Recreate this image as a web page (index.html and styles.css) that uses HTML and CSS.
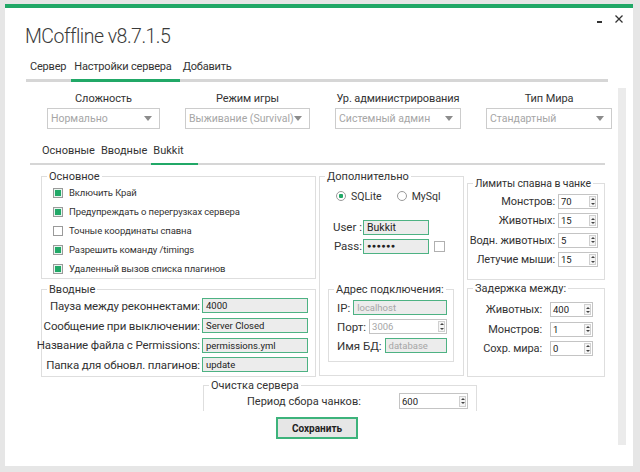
FILE: index.html
```html
<!DOCTYPE html>
<html lang="ru">

<head>
  <meta charset="UTF-8" />
  <meta name="viewport" content="width=device-width, initial-scale=1.0" />
  <title>MCoffline</title>
  <link rel="stylesheet" href="styles.css">
</head>

<body>
  <div class="window">
    <div class="header">
      <h1 class="title">MCoffline v8.7.1.5</h1>
      <div class="win-controls">
        <span class="win-min"></span>
        <svg class="win-close" width="8" height="8" viewBox="0 0 8 8">
          <path d="M0.5 0.5 L7.5 7.5 M7.5 0.5 L0.5 7.5" stroke="#333" stroke-width="1.3" />
        </svg>
      </div>
    </div>

    <ul class="tabs">
      <li>Сервер</li>
      <li class="active">Настройки сервера</li>
      <li>Добавить</li>
    </ul>

    <div class="panel">
      <div class="panel-body">

        <div class="selects">
          <div class="select-field">
            <div class="select-label">Сложность</div>
            <div class="select"><span>Нормально</span><i class="arrow"></i></div>
          </div>
          <div class="select-field">
            <div class="select-label">Режим игры</div>
            <div class="select"><span>Выживание (Survival)</span><i class="arrow"></i></div>
          </div>
          <div class="select-field">
            <div class="select-label">Ур. администрирования</div>
            <div class="select"><span>Системный админ</span><i class="arrow"></i></div>
          </div>
          <div class="select-field">
            <div class="select-label">Тип Мира</div>
            <div class="select"><span>Стандартный</span><i class="arrow"></i></div>
          </div>
        </div>

        <ul class="subtabs">
          <li>Основные</li>
          <li>Вводные</li>
          <li class="active">Bukkit</li>
        </ul>

        <div class="groups">
          <!-- left column -->
          <div class="col col-left">
            <fieldset class="box box-main">
              <legend>Основное</legend>
              <div class="check-row"><span class="check on"></span>Включить Край</div>
              <div class="check-row"><span class="check on"></span>Предупреждать о перегрузках сервера</div>
              <div class="check-row"><span class="check"></span>Точные координаты спавна</div>
              <div class="check-row"><span class="check on"></span>Разрешить команду /timings</div>
              <div class="check-row"><span class="check on"></span>Удаленный вызов списка плагинов</div>
            </fieldset>

            <fieldset class="box box-inputs">
              <legend>Вводные</legend>
              <div class="form-row"><label>Пауза между реконнектами:</label><div class="input">4000</div></div>
              <div class="form-row"><label>Сообщение при выключении:</label><div class="input">Server Closed</div></div>
              <div class="form-row"><label>Название файла с Permissions:</label><div class="input">permissions.yml</div></div>
              <div class="form-row"><label>Папка для обновл. плагинов:</label><div class="input">update</div></div>
            </fieldset>
          </div>

          <!-- middle column -->
          <div class="col col-mid">
            <fieldset class="box box-extra">
              <legend>Дополнительно</legend>
              <div class="radio-row">
                <span class="radio on"></span>SQLite
                <span class="radio second"></span>MySql
              </div>
              <div class="login-row user-row"><label>User :</label><div class="input">Bukkit</div></div>
              <div class="login-row"><label>Pass:</label><div class="input dots">●●●●●●</div><span class="check small"></span></div>

              <fieldset class="box box-addr">
                <legend>Адрес подключения:</legend>
                <div class="addr-row"><label>IP:</label><div class="input muted">localhost</div></div>
                <div class="addr-row"><label>Порт:</label>
                  <div class="spin muted"><span>3006</span><span class="spin-btns"><i class="up"></i><i class="down"></i></span></div>
                </div>
                <div class="addr-row"><label>Имя БД:</label><div class="input muted">database</div></div>
              </fieldset>
            </fieldset>
          </div>

          <!-- right column -->
          <div class="col col-right">
            <fieldset class="box box-limits">
              <legend>Лимиты спавна в чанке</legend>
              <div class="num-row"><label>Монстров:</label>
                <div class="spin"><span>70</span><span class="spin-btns"><i class="up"></i><i class="down"></i></span></div>
              </div>
              <div class="num-row"><label>Животных:</label>
                <div class="spin"><span>15</span><span class="spin-btns"><i class="up"></i><i class="down"></i></span></div>
              </div>
              <div class="num-row"><label>Водн. животных:</label>
                <div class="spin"><span>5</span><span class="spin-btns"><i class="up"></i><i class="down"></i></span></div>
              </div>
              <div class="num-row"><label>Летучие мыши:</label>
                <div class="spin"><span>15</span><span class="spin-btns"><i class="up"></i><i class="down"></i></span></div>
              </div>
            </fieldset>

            <fieldset class="box box-delay">
              <legend>Задержка между:</legend>
              <div class="num-row"><label>Животных:</label>
                <div class="spin"><span>400</span><span class="spin-btns"><i class="up"></i><i class="down"></i></span></div>
              </div>
              <div class="num-row"><label>Монстров:</label>
                <div class="spin"><span>1</span><span class="spin-btns"><i class="up"></i><i class="down"></i></span></div>
              </div>
              <div class="num-row"><label>Сохр. мира:</label>
                <div class="spin"><span>0</span><span class="spin-btns"><i class="up"></i><i class="down"></i></span></div>
              </div>
            </fieldset>
          </div>
        </div>

        <fieldset class="box box-clean">
          <legend>Очистка сервера</legend>
          <div class="clean-row"><label>Период сбора чанков:</label>
            <div class="spin"><span>600</span><span class="spin-btns"><i class="up"></i><i class="down"></i></span></div>
          </div>
        </fieldset>

        <button class="save-btn">Сохранить</button>
      </div>
      <div class="scrolltrack"></div>
    </div>
  </div>
</body>

</html>
```

FILE: styles.css
```css
:root {
  --green: #21a867;
  --green-border: #4db283;
  --line: #d6d6d6;
  --box-line: #dedede;
  --text: #333333;
  --muted: #a6a6a6;
}

body {
  margin: 0;
  background-color: #e6e6e6;
  font-family: Roboto, 'Noto Sans', sans-serif;
  color: var(--text);
}

.window {
  margin: 4px 7px 6px 5px;
  height: 458px;
  background-color: #ffffff;
  border-top: 4px solid var(--green);
  display: flex;
  flex-direction: column;
}

/* title bar */
.header {
  display: flex;
  height: 42px;
  padding-left: 20px;
}

.title {
  margin: 0;
  padding-top: 16px;
  font-size: 19.5px;
  line-height: 25px;
  font-weight: 300;
  letter-spacing: -0.5px;
  color: #3a3a3a;
}

.win-controls {
  margin-left: auto;
  display: flex;
  align-items: flex-start;
  padding: 6px 10px 0 0;
}

.win-min {
  width: 5px;
  height: 2px;
  background: #333;
  margin: 7px 13px 0 0;
}

.win-close {
  margin-top: 1px;
}

/* main tabs */
.tabs {
  display: flex;
  list-style: none;
  margin: 0 0 0 21px;
  padding: 0;
  width: 582px;
  border-bottom: 3px solid var(--line);
}

.tabs li {
  padding: 9px 5px 4px 3px;
  font-size: 11px;
  letter-spacing: -0.2px;
  line-height: 16px;
  margin-bottom: -3px;
  border-bottom: 3px solid transparent;
}

.tabs li:first-child {
  padding-left: 4px;
}

.tabs li.active {
  border-bottom-color: var(--green);
  padding-right: 8px;
}

/* panel with scroll track */
.panel {
  display: flex;
  flex: 1;
}

.panel-body {
  flex: 1;
}

.scrolltrack {
  width: 8px;
  margin: 6px 7px 21px 0;
  background-color: #ebebeb;
}

/* dropdowns */
.selects {
  display: grid;
  grid-template-columns: 113px 125px 126px 126px;
  column-gap: 25px;
  padding-left: 42px;
  margin-top: 10px;
}

.select-label {
  text-align: center;
  font-size: 11px;
  letter-spacing: -0.1px;
  line-height: 14px;
  white-space: nowrap;
}

.select {
  margin-top: 2px;
  height: 21px;
  box-sizing: border-box;
  border: 1px solid #cccccc;
  display: flex;
  align-items: center;
  padding: 0 7px 0 3px;
  font-size: 10.5px;
  color: var(--muted);
  white-space: nowrap;
  overflow: hidden;
}

.arrow {
  margin-left: auto;
  border-top: 5px solid #8c8c8c;
  border-left: 4px solid transparent;
  border-right: 4px solid transparent;
}

/* sub tabs */
.subtabs {
  display: flex;
  list-style: none;
  margin: 14px 0 0 25px;
  padding: 0 0 0 10px;
  width: 565px;
  border-bottom: 2px solid var(--line);
}

.subtabs li {
  padding: 1px 4px 5px 2px;
  font-size: 11px;
  line-height: 14px;
  margin-bottom: -2px;
  border-bottom: 2px solid transparent;
}

.subtabs li.active {
  border-bottom-color: var(--green);
  padding-right: 14px;
}

/* group boxes */
.groups {
  display: flex;
  align-items: flex-start;
  margin-top: 5px;
  padding-left: 36px;
}

.col {
  display: flex;
  flex-direction: column;
}

.col-left {
  width: 275px;
  margin-right: 3px;
}

.col-mid {
  width: 145px;
  margin-right: 3px;
}

.col-right {
  width: 138px;
  margin-top: 7px;
}

.box {
  margin: 0;
  padding: 0;
  min-width: 0;
  border: 1px solid var(--box-line);
}

.box legend {
  margin-left: 5px;
  padding: 0 2px;
  font-size: 11px;
  line-height: 13px;
  white-space: nowrap;
}

/* Основное */
.check-row {
  display: flex;
  align-items: center;
  height: 19px;
  padding-left: 11px;
  font-size: 9.5px;
  letter-spacing: -0.1px;
}

.check {
  width: 10px;
  height: 10px;
  box-sizing: border-box;
  border: 1px solid #9a9a9a;
  background: #fff;
  margin-right: 6px;
  flex-shrink: 0;
}

.check.on {
  background: var(--green);
  box-shadow: inset 0 0 0 1px #e8f5ee;
}

/* Вводные */
.box-inputs {
  margin-top: 4px;
  padding: 0 0 1px 0;
}

.form-row {
  display: grid;
  grid-template-columns: 158px 106px;
  column-gap: 2px;
  align-items: center;
  height: 19.7px;
}

.form-row label {
  justify-self: end;
  font-size: 11.5px;
  letter-spacing: -0.15px;
  white-space: nowrap;
}

.input {
  height: 15px;
  box-sizing: border-box;
  background: #ececec;
  border: 1px solid var(--green-border);
  font-size: 9.5px;
  line-height: 13px;
  padding: 0 3px;
  color: #222;
  white-space: nowrap;
  overflow: hidden;
}

.input.muted {
  color: var(--muted);
}

/* Дополнительно */
.box-extra {
  padding-bottom: 13px;
}

.radio-row {
  display: flex;
  align-items: center;
  height: 14px;
  margin-top: 6px;
  padding-left: 16px;
  font-size: 10.5px;
}

.radio {
  width: 10px;
  height: 10px;
  box-sizing: border-box;
  border: 1px solid #9a9a9a;
  border-radius: 50%;
  margin-right: 5px;
}

.radio.on {
  background: radial-gradient(circle, var(--green) 0 2px, #fff 2.5px);
}

.radio.second {
  margin-left: 15px;
}

.login-row {
  display: grid;
  grid-template-columns: 42px 66px auto;
  column-gap: 1px;
  align-items: center;
  margin-top: 4px;
}

.login-row.user-row {
  margin-top: 17px;
}

.login-row label {
  text-align: right;
  font-size: 11.5px;
  line-height: 15px;
}

.login-row .input {
  font-size: 10.5px;
}

.input.dots {
  font-size: 7px;
  letter-spacing: 0.5px;
}

.check.small {
  margin-left: 4px;
  width: 11px;
  height: 11px;
  border-color: #b0b0b0;
}

.box-addr {
  margin: 29px 9px 0 8px;
  padding: 2px 6px 6px 0;
}

.addr-row {
  display: flex;
  align-items: center;
  height: 19px;
  padding-left: 8px;
}

.addr-row label {
  font-size: 11.5px;
  margin-right: 3px;
  white-space: nowrap;
}

.addr-row .input,
.addr-row .spin {
  flex: 1;
}

/* spin boxes */
.spin {
  display: flex;
  align-items: center;
  height: 15px;
  box-sizing: border-box;
  border: 1px solid #c4c4c4;
  background: #fff;
  font-size: 9.5px;
  color: #222;
  padding-left: 2px;
}

.spin.muted {
  color: var(--muted);
}

.spin-btns {
  margin-left: auto;
  margin-right: 1px;
  width: 7px;
  height: 11px;
  box-sizing: border-box;
  border: 1px solid #d0d0d0;
  background: #f5f5f5;
  display: flex;
  flex-direction: column;
  justify-content: space-around;
  align-items: center;
}

.spin-btns .up {
  border-bottom: 2px solid #444;
  border-left: 2px solid transparent;
  border-right: 2px solid transparent;
}

.spin-btns .down {
  border-top: 2px solid #444;
  border-left: 2px solid transparent;
  border-right: 2px solid transparent;
}

/* Лимиты / Задержка */
.num-row {
  display: grid;
  align-items: center;
  height: 19.3px;
}

.num-row label {
  justify-self: end;
  font-size: 11px;
  letter-spacing: -0.1px;
  white-space: nowrap;
}

.box-limits legend {
  font-size: 10.5px;
  letter-spacing: -0.1px;
}

.box-limits {
  padding: 2px 0 10px 0;
}

.box-limits .num-row {
  grid-template-columns: 87px 40px;
  column-gap: 3px;
}

.box-delay {
  margin-top: 2px;
  padding: 5px 0 18px 0;
}

.box-delay .num-row {
  grid-template-columns: 74px 43px;
  column-gap: 8px;
}

/* Очистка сервера */
.box-clean {
  width: 264px;
  margin: 2px 0 0 198px;
  padding: 1px 8px 2px 0;
  border-bottom: none;
}

.clean-row {
  display: flex;
  align-items: center;
  height: 16px;
  padding-left: 43px;
}

.clean-row label {
  font-size: 11px;
}

.clean-row .spin {
  margin-left: auto;
  width: 69px;
  height: 16px;
}

.save-btn {
  display: block;
  margin: 6px 0 0 271px;
  width: 82px;
  height: 22px;
  border: 2px solid #3db37b;
  background: #e6e6e6;
  font-family: inherit;
  font-size: 10px;
  font-weight: bold;
  color: #222;
  padding: 0;
}
```
